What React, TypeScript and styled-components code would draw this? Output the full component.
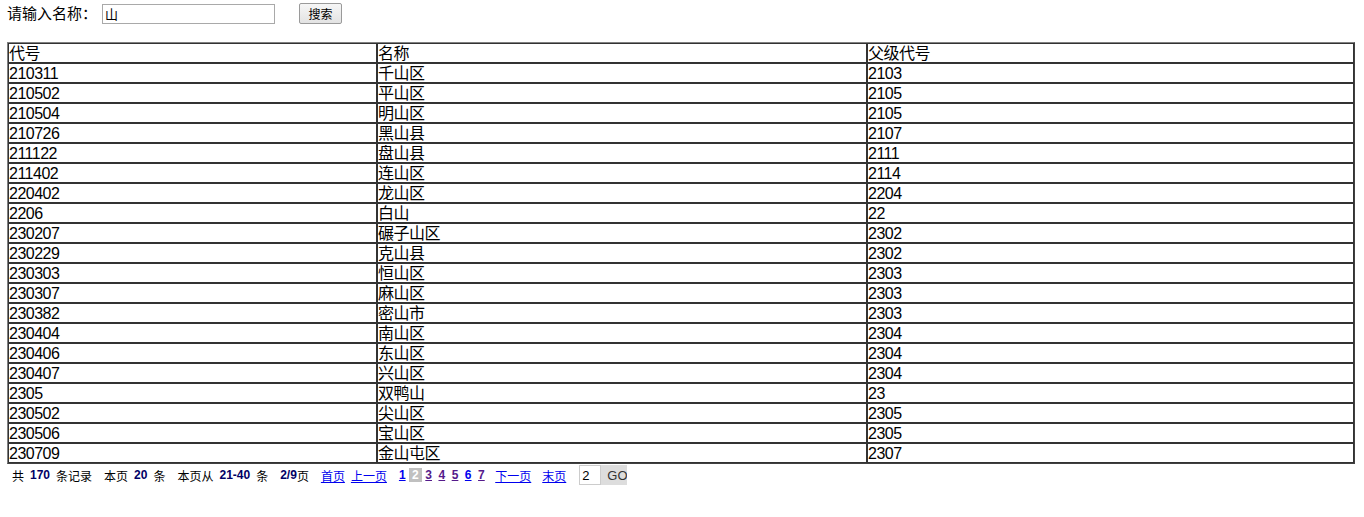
import React from "react";
import styled, { createGlobalStyle } from "styled-components";

const Global = createGlobalStyle`
  html, body { margin: 0; padding: 0; background: #fff; }
  body { font-family: "Liberation Sans", "Noto Sans CJK SC", sans-serif; color: #000; }
`;

const Page = styled.div`
  padding: 3px 9px 0 7px;
  width: 1348px;
`;

const SearchBar = styled.div`
  display: flex;
  align-items: center;
  height: 21px;
  font-size: 15px;
`;

const Label = styled.span`
  line-height: 21px;
  margin-right: 5px;
`;

const SearchInput = styled.input`
  box-sizing: border-box;
  width: 173px;
  height: 20px;
  border: 1px solid #a9a9a9;
  padding: 0 2px;
  font-size: 13px;
  font-family: "Noto Sans CJK SC", sans-serif;
  outline: none;
`;

const SearchButton = styled.button`
  box-sizing: border-box;
  margin-left: 24px;
  width: 43px;
  height: 21px;
  border: 1px solid #9a9a9a;
  border-radius: 2px;
  background: linear-gradient(#f6f6f6, #e3e3e3);
  font-size: 12px;
  font-family: "Noto Sans CJK SC", sans-serif;
  padding: 0;
  color: #000;
`;

const Table = styled.table`
  margin-top: 18px;
  width: 1348px;
  border-collapse: separate;
  border-spacing: 0;
  border: 1px solid #808080;
  border-right-color: #404040;
  border-bottom-color: #404040;
  table-layout: fixed;
  font-size: 16px;
  letter-spacing: -0.5px;
`;

const Cell = styled.td<{ $w?: number }>`
  box-sizing: border-box;
  border: 1px solid #333;
  padding: 1px 0 0;
  height: 20px;
  line-height: 17px;
  white-space: nowrap;
  overflow: hidden;
  ${(p) => (p.$w ? `width: ${p.$w}px;` : "")}
`;

const HeadCell = styled(Cell)`
  font-weight: normal;
  text-align: left;
`;

const Pager = styled.div`
  display: flex;
  align-items: center;
  height: 22px;
  padding-left: 5px;
  font-size: 12px;
  font-family: "Noto Sans CJK SC", sans-serif;
`;

const Txt = styled.span<{ $m?: number }>`
  margin-right: ${(p) => p.$m ?? 0}px;
  white-space: nowrap;
`;

const Num = styled.b<{ $m?: number }>`
  color: #000066;
  font-family: "Liberation Sans", sans-serif;
  margin-right: ${(p) => p.$m ?? 0}px;
`;

const Link = styled.a<{ $m?: number; $l?: number }>`
  color: #0000ee;
  text-decoration: underline;
  margin-right: ${(p) => p.$m ?? 0}px;
  margin-left: ${(p) => p.$l ?? 0}px;
  cursor: pointer;
`;

const PageNum = styled.a<{ $visited?: boolean; $current?: boolean }>`
  font-family: "Liberation Sans", sans-serif;
  font-weight: bold;
  padding: 0 3px;
  margin-right: 0.5px;
  line-height: 14px;
  color: ${(p) => (p.$current ? "#fff" : p.$visited ? "#551a8b" : "#0000ee")};
  background: ${(p) => (p.$current ? "#c0c0c0" : "transparent")};
  text-decoration: ${(p) => (p.$current ? "none" : "underline")};
`;

const GoInput = styled.input`
  box-sizing: border-box;
  width: 22px;
  height: 20px;
  margin-left: 13px;
  border: 1px solid #ccc;
  padding: 0 2px;
  font-size: 13px;
  font-family: "Liberation Sans", sans-serif;
  outline: none;
`;

const GoButton = styled.button`
  box-sizing: border-box;
  width: 26px;
  height: 20px;
  border: none;
  background: #dddddd;
  padding: 0 0 0 6px;
  font-size: 13px;
  font-family: "Liberation Sans", sans-serif;
  color: #333;
  text-align: left;
  overflow: hidden;
  white-space: nowrap;
`;

const rows: [string, string, string][] = [
  ["210311", "千山区", "2103"],
  ["210502", "平山区", "2105"],
  ["210504", "明山区", "2105"],
  ["210726", "黑山县", "2107"],
  ["211122", "盘山县", "2111"],
  ["211402", "连山区", "2114"],
  ["220402", "龙山区", "2204"],
  ["2206", "白山", "22"],
  ["230207", "碾子山区", "2302"],
  ["230229", "克山县", "2302"],
  ["230303", "恒山区", "2303"],
  ["230307", "麻山区", "2303"],
  ["230382", "密山市", "2303"],
  ["230404", "南山区", "2304"],
  ["230406", "东山区", "2304"],
  ["230407", "兴山区", "2304"],
  ["2305", "双鸭山", "23"],
  ["230502", "尖山区", "2305"],
  ["230506", "宝山区", "2305"],
  ["230709", "金山屯区", "2307"],
];

const pages: { n: number; visited?: boolean; current?: boolean }[] = [
  { n: 1 },
  { n: 2, current: true },
  { n: 3, visited: true },
  { n: 4, visited: true },
  { n: 5, visited: true },
  { n: 6 },
  { n: 7, visited: true },
];

export default function App() {
  return (
    <Page>
      <Global />
      <SearchBar>
        <Label>请输入名称：</Label>
        <SearchInput defaultValue="山" />
        <SearchButton>搜索</SearchButton>
      </SearchBar>
      <Table>
        <thead>
          <tr>
            <HeadCell as="th" $w={369}>代号</HeadCell>
            <HeadCell as="th" $w={490}>名称</HeadCell>
            <HeadCell as="th">父级代号</HeadCell>
          </tr>
        </thead>
        <tbody>
          {rows.map((r) => (
            <tr key={r[0]}>
              <Cell>{r[0]}</Cell>
              <Cell>{r[1]}</Cell>
              <Cell>{r[2]}</Cell>
            </tr>
          ))}
        </tbody>
      </Table>
      <Pager>
        <Txt $m={6}>共</Txt>
        <Num $m={6}>170</Num>
        <Txt $m={12}>条记录</Txt>
        <Txt $m={6}>本页</Txt>
        <Num $m={6}>20</Num>
        <Txt $m={12}>条</Txt>
        <Txt $m={6}>本页从</Txt>
        <Num $m={6}>21-40</Num>
        <Txt $m={12}>条</Txt>
        <Num>2/9</Num>
        <Txt $m={12}>页</Txt>
        <Link $m={6}>首页</Link>
        <Link $m={9}>上一页</Link>
        {pages.map((p) => (
          <PageNum key={p.n} $visited={p.visited} $current={p.current}>
            {p.n}
          </PageNum>
        ))}
        <Link $m={11} $l={7}>下一页</Link>
        <Link>末页</Link>
        <GoInput defaultValue="2" />
        <GoButton>GO</GoButton>
      </Pager>
    </Page>
  );
}
